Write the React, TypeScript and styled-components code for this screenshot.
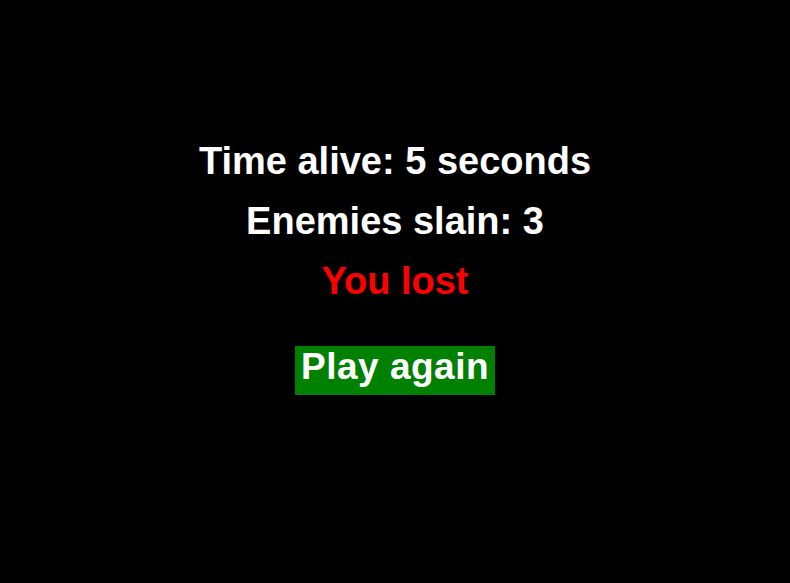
import styled, { createGlobalStyle } from "styled-components";

const Global = createGlobalStyle`
  html, body {
    margin: 0;
    padding: 0;
    background: #000;
  }
  body {
    font-family: "Liberation Sans", Arial, sans-serif;
  }
`;

const Screen = styled.div`
  width: 790px;
  height: 583px;
  background: #000;
  display: flex;
  flex-direction: column;
  align-items: center;
  padding-top: 131px;
  box-sizing: border-box;
`;

const Line = styled.div<{ $color?: string }>`
  color: ${(p) => p.$color || "#fff"};
  font-size: 38px;
  font-weight: bold;
  line-height: 60px;
  height: 60px;
`;

const Button = styled.button`
  margin-top: 35px;
  box-sizing: border-box;
  background: #008000;
  color: #fff;
  border: none;
  font-family: "Liberation Sans", Arial, sans-serif;
  font-size: 37px;
  font-weight: bold;
  letter-spacing: 0.5px;
  line-height: 41px;
  width: 200px;
  height: 49px;
  padding: 0 0 8px;
  cursor: pointer;
`;

export default function App() {
  return (
    <>
      <Global />
      <Screen>
        <Line>Time alive: 5 seconds</Line>
        <Line>Enemies slain: 3</Line>
        <Line $color="#f00">You lost</Line>
        <Button>Play again</Button>
      </Screen>
    </>
  );
}
